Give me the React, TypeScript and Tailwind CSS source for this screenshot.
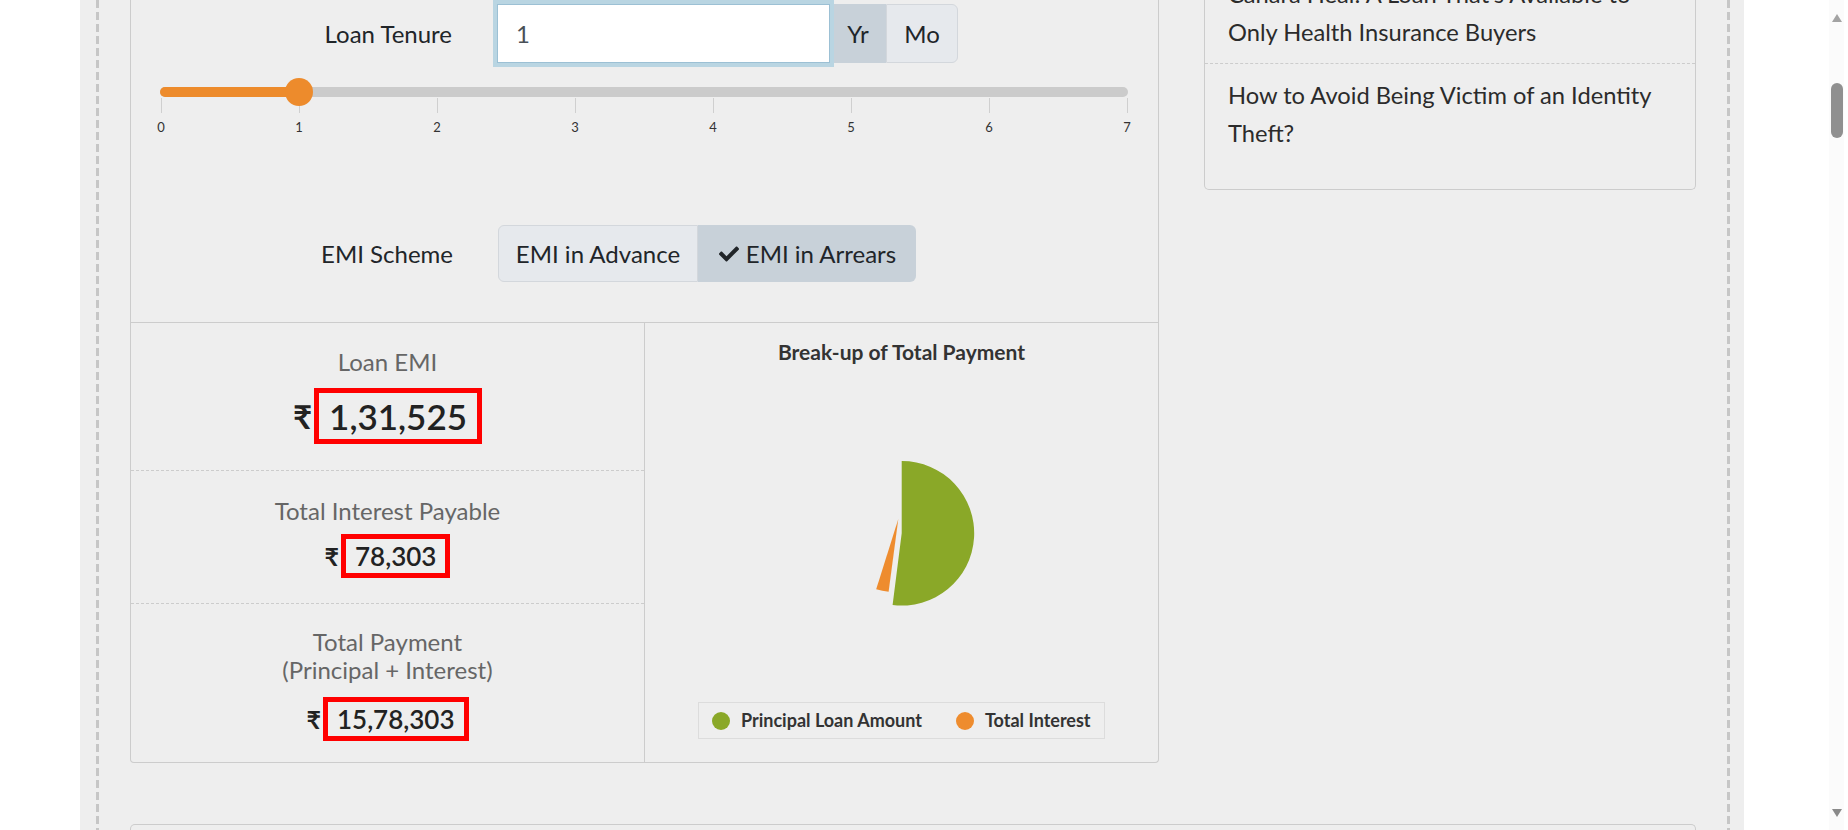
import { FaCheck } from "react-icons/fa";

const TICKS = [0, 1, 2, 3, 4, 5, 6, 7];

function Amount({ value, big }: { value: string; big?: boolean }) {
  return (
    <div className="flex items-center justify-center gap-[2px]">
      <span
        className={
          big
            ? "text-[33px] font-bold leading-[46px] text-[#222222]"
            : "text-[25px] font-bold leading-[34px] text-[#222222]"
        }
      >
        ₹
      </span>
      <span
        className={
          big
            ? "border-[5px] border-[#ff0000] px-[10px] text-[35px] font-semibold leading-[46px] text-[#222222]"
            : "border-[5px] border-[#ff0000] px-[9px] text-[26px] font-semibold leading-[34px] text-[#222222]"
        }
      >
        {value}
      </span>
    </div>
  );
}

function PieChart() {
  return (
    <svg width="513" height="320" viewBox="0 0 513 320" className="block">
      <path
        d="M256.7 167.3 L256.7 95 A72.3 72.3 0 1 1 247.6 239 Z"
        fill="#8aa828"
      />
      <path
        d="M253.3 153 L243.6 225.7 A73 73 0 0 1 231.2 223.3 Z"
        fill="#ee8c2e"
      />
    </svg>
  );
}

function DashedRule() {
  return (
    <div className="h-full w-[3px] shrink-0 bg-[repeating-linear-gradient(to_bottom,#c6c6c6_0px,#c6c6c6_8px,transparent_8px,transparent_12px)]" />
  );
}

function Scrollbar() {
  return (
    <div className="flex h-full w-[15px] shrink-0 flex-col items-center bg-[#fbfbfb]">
      <svg width="10" height="8" viewBox="0 0 10 8" className="mt-[14px]">
        <polygon points="5,0 10,8 0,8" fill="#a3a3a3" />
      </svg>
      <div className="mt-[61px] h-[55px] w-[12px] rounded-[6px] bg-[#909090]" />
      <div className="flex-1" />
      <svg width="10" height="8" viewBox="0 0 10 8" className="mb-[13px]">
        <polygon points="0,0 10,0 5,8" fill="#8a8a8a" />
      </svg>
    </div>
  );
}

export default function App() {
  return (
    <div className="flex h-[830px] w-[1848px] overflow-hidden bg-white font-['Lato','DejaVu_Sans',sans-serif] text-[#212529]">
      <div className="ml-[80px] flex h-full w-[1664px] shrink-0 bg-[#eeeeee] pl-[16px] pr-[14px]">
        <DashedRule />
        <div className="flex flex-1 flex-col px-[31px]">
          <div className="flex items-start gap-[45px]">
            {/* calculator card */}
            <div className="w-[1029px] shrink-0 rounded-b-[4px] border-x border-b border-[#cccccc]">
              <div className="mt-[4px] flex items-center">
                <div className="w-[321px] text-right text-[24px] leading-[30px]">
                  Loan Tenure
                </div>
                <div className="ml-[45px] flex h-[59px]">
                  <div className="relative z-10 flex w-[333px] items-center border border-[#9cc0d4] bg-white pl-[18px] text-[24px] text-[#495057] shadow-[0_0_0_4px_#b9d5e2]">
                    1
                  </div>
                  <div className="flex w-[56px] items-center justify-center bg-[#c8d1d9] text-[24px]">
                    Yr
                  </div>
                  <div className="flex w-[72px] items-center justify-center rounded-r-[6px] border border-[#d3d7dc] bg-[#e6e9ed] text-[24px]">
                    Mo
                  </div>
                </div>
              </div>

              <div className="relative ml-[29px] mt-[24px] h-[10px] w-[968px] rounded-full bg-[#cbcbcb]">
                <div className="h-full w-[139px] rounded-full bg-[#ed8b2c]" />
                <div className="absolute left-[125px] top-[-9px] h-[28px] w-[28px] rounded-full bg-[#ed8b2c]" />
              </div>
              <div className="ml-[29px] mt-[1px] flex w-[968px] justify-between">
                {TICKS.map((t) => (
                  <div key={t} className="flex w-[2px] flex-col items-center">
                    <div className="h-[15px] w-px bg-[#cfcfcf]" />
                    <div className="mt-[6px] text-[13px] leading-[16px] text-[#333333]">
                      {t}
                    </div>
                  </div>
                ))}
              </div>

              <div className="mb-[40px] mt-[90px] flex items-center">
                <div className="w-[322px] text-right text-[24px] leading-[30px]">
                  EMI Scheme
                </div>
                <div className="ml-[45px] flex h-[57px] text-[24px]">
                  <div className="flex w-[200px] items-center justify-center rounded-l-[6px] border border-[#d3d7dc] bg-[#e6e9ed]">
                    EMI in Advance
                  </div>
                  <div className="flex w-[218px] items-center justify-center gap-[6px] rounded-r-[6px] bg-[#c8d1d9]">
                    <FaCheck className="h-[20px] w-[22px]" />
                    <span>EMI in Arrears</span>
                  </div>
                </div>
              </div>

              <div className="flex border-t border-[#cccccc]">
                <div className="w-[514px] shrink-0 border-r border-[#cccccc] text-center">
                  <div className="pb-[26px] pt-[25px]">
                    <div className="text-[24px] leading-[28px] text-[#666666]">
                      Loan EMI
                    </div>
                    <div className="mt-[12px]">
                      <Amount value="1,31,525" big />
                    </div>
                  </div>
                  <div className="border-t border-dashed border-[#cccccc] pb-[25px] pt-[26px]">
                    <div className="text-[24px] leading-[28px] text-[#666666]">
                      Total Interest Payable
                    </div>
                    <div className="mt-[9px]">
                      <Amount value="78,303" />
                    </div>
                  </div>
                  <div className="border-t border-dashed border-[#cccccc] pb-[21px] pt-[24px]">
                    <div className="text-[24px] leading-[28px] text-[#666666]">
                      Total Payment
                      <br />
                      (Principal + Interest)
                    </div>
                    <div className="mt-[13px]">
                      <Amount value="15,78,303" />
                    </div>
                  </div>
                </div>

                <div className="flex-1">
                  <div className="pt-[15px] text-center text-[21px] font-bold leading-[28px] text-[#333333]">
                    Break-up of Total Payment
                  </div>
                  <PieChart />
                  <div className="mx-auto mt-[16px] flex h-[37px] w-[407px] items-center border border-[#dcdcdc] pl-[13px] text-[18px] font-bold text-[#333333]">
                    <span className="h-[18px] w-[18px] rounded-full bg-[#8aa828]" />
                    <span className="ml-[11px]">Principal Loan Amount</span>
                    <span className="ml-[34px] h-[18px] w-[18px] rounded-full bg-[#ee8c2e]" />
                    <span className="ml-[11px]">Total Interest</span>
                  </div>
                </div>
              </div>
            </div>

            {/* related articles */}
            <div className="-mt-[37px] w-[492px] shrink-0 rounded-b-[5px] border-x border-b border-[#cccccc] pb-[25px] text-[23.7px] leading-[38px] text-[#2b2b2b]">
              <div className="whitespace-nowrap px-[23px] py-[12px]">
                Canara Heal: A Loan That’s Available to
                <br />
                Only Health Insurance Buyers
              </div>
              <div className="whitespace-nowrap border-t border-dashed border-[#cccccc] px-[23px] py-[12px]">
                How to Avoid Being Victim of an Identity
                <br />
                Theft?
              </div>
            </div>
          </div>

          <div className="mt-[61px] h-[40px] rounded-t-[5px] border-x border-t border-[#cccccc]" />
        </div>
        <DashedRule />
      </div>
      <div className="w-[85px] shrink-0" />
      <Scrollbar />
    </div>
  );
}
